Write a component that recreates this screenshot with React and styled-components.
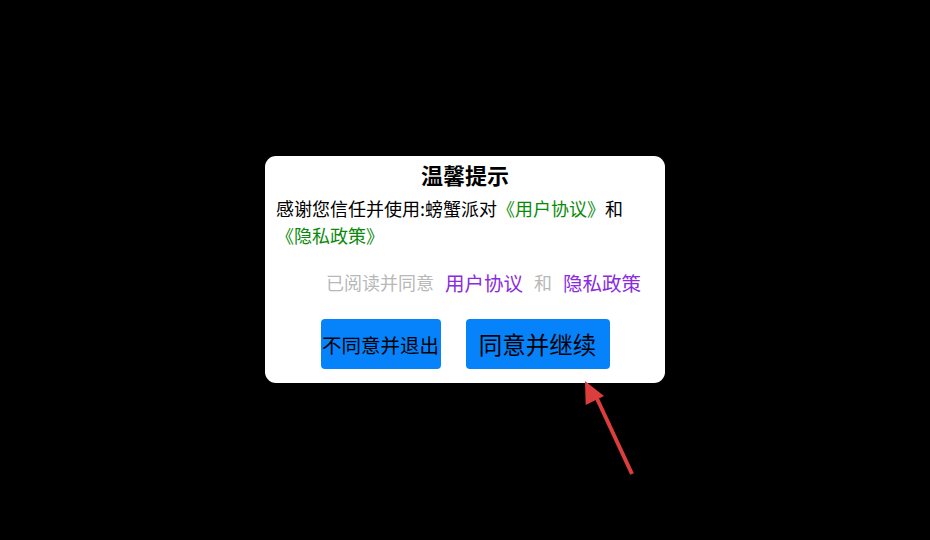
import styled, { createGlobalStyle } from "styled-components";

const GlobalStyle = createGlobalStyle`
  html, body {
    margin: 0;
    padding: 0;
    background: #000;
  }
  body {
    font-family: "Noto Sans CJK SC", "Noto Sans", sans-serif;
  }
`;

const Page = styled.div`
  width: 930px;
  height: 540px;
  display: flex;
  align-items: center;
  justify-content: center;
  background: #000;
`;

const Dialog = styled.div`
  position: relative;
  box-sizing: border-box;
  width: 400px;
  height: 227px;
  margin-top: -1px;
  padding: 6px 11px 13px;
  background: #fff;
  border-radius: 11px;
  display: flex;
  flex-direction: column;
`;

const Title = styled.h2`
  margin: 0;
  font-size: 22px;
  line-height: 24px;
  font-weight: 700;
  text-align: center;
  color: #000;
`;

const Message = styled.p`
  margin: 9px 0 0;
  font-size: 18px;
  line-height: 27px;
  color: #000;
`;

const Link = styled.span`
  color: #0a8a0a;
`;

const AgreeRow = styled.div`
  margin-top: 20px;
  padding-right: 13px;
  display: flex;
  justify-content: flex-end;
  align-items: center;
  gap: 11px;
  height: 26px;
`;

const Hint = styled.span`
  color: #b8b8b8;
  font-size: 18px;
`;

const Doc = styled.span`
  color: #8a2be2;
  font-size: 19.5px;
`;

const Buttons = styled.div`
  margin-top: 24px;
  display: flex;
  justify-content: center;
  gap: 25px;
`;

const Button = styled.button`
  width: ${(p) => p.$w}px;
  height: 50px;
  padding: 0;
  border: none;
  border-radius: 4px;
  background: #0683fb;
  color: #000;
  font-family: inherit;
  font-size: ${(p) => p.$size}px;
  white-space: nowrap;
  display: flex;
  align-items: center;
  justify-content: center;
`;

const Pointer = styled.svg`
  position: absolute;
  left: 316px;
  top: 222px;
  overflow: visible;
`;

export default function App() {
  return (
    <>
      <GlobalStyle />
      <Page>
        <Dialog>
          <Title>温馨提示</Title>
          <Message>
            感谢您信任并使用:螃蟹派对<Link>《用户协议》</Link>和
            <br />
            <Link>《隐私政策》</Link>
          </Message>
          <AgreeRow>
            <Hint>已阅读并同意</Hint>
            <Doc>用户协议</Doc>
            <Hint>和</Hint>
            <Doc>隐私政策</Doc>
          </AgreeRow>
          <Buttons>
            <Button $w={120} $size={19.5}>不同意并退出</Button>
            <Button $w={144} $size={23.5}>同意并继续</Button>
          </Buttons>
          <Pointer width="60" height="100" viewBox="0 0 60 100">
            <line x1="12" y1="12" x2="51" y2="96" stroke="#dc3d3d" strokeWidth="4" />
            <polygon points="4,3 23,18 4.7,27" fill="#dc3d3d" />
          </Pointer>
        </Dialog>
      </Page>
    </>
  );
}
